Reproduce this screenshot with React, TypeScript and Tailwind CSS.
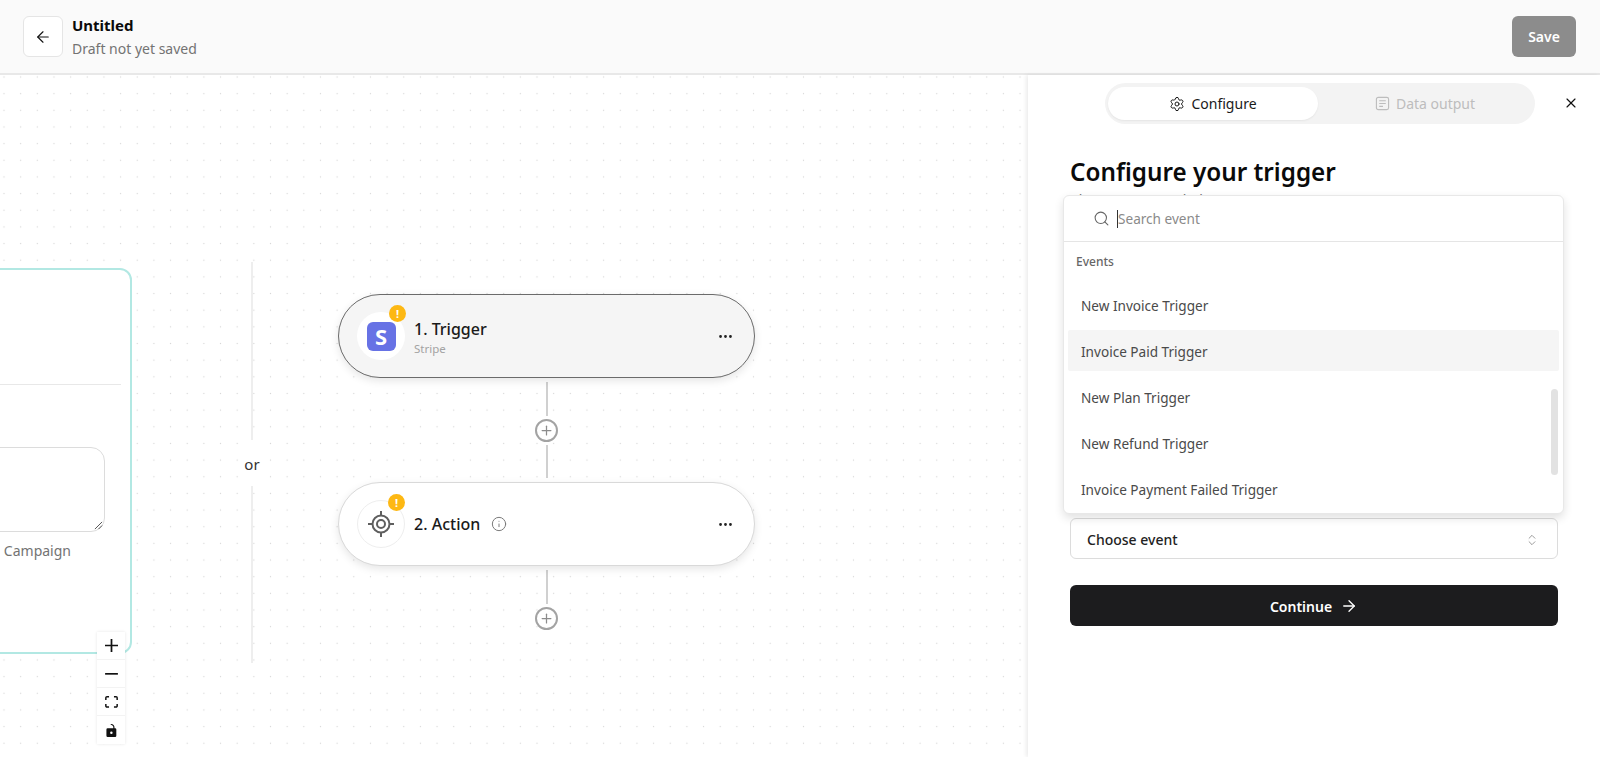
import { ArrowLeft, ArrowRight, ChevronsUpDown, Ellipsis, Info, Plus, Search, Settings, X } from "lucide-react";

const events = ["New Invoice Trigger", "Invoice Paid Trigger", "New Plan Trigger", "New Refund Trigger", "Invoice Payment Failed Trigger"];

const Badge = () => (
  <span className="absolute -right-[1px] -top-[7px] flex h-[17px] w-[17px] items-center justify-center rounded-full bg-[#fdb813] text-[11px] font-bold leading-none text-white">
    !
  </span>
);

const Connector = ({ tail = true }: { tail?: boolean }) => (
  <div className="flex h-[104px] w-[26px] flex-col items-center">
    <div className="mt-[4px] h-[34px] w-[2px] bg-[#d0d0d0]" />
    <div className="mt-[3px] flex h-[23px] w-[23px] shrink-0 items-center justify-center rounded-full border-2 border-[#a3a3a3] bg-white">
      <Plus size={15} strokeWidth={2} className="text-[#8c8c8c]" />
    </div>
    {tail && <div className="mt-[3px] h-[33px] w-[2px] bg-[#d0d0d0]" />}
  </div>
);

const Controls = () => (
  <div className="absolute left-[97px] top-[557px] flex w-[28px] flex-col bg-white shadow-[0_0_3px_rgba(0,0,0,0.1)]">
    <button className="flex h-[28px] items-center justify-center border-b border-[#f3f3f3]">
      <svg viewBox="0 0 32 32" className="h-[13px] w-[13px]" fill="#111">
        <path d="M32 18.133H18.133V32h-4.266V18.133H0v-4.266h13.867V0h4.266v13.867H32z" />
      </svg>
    </button>
    <button className="flex h-[28px] items-center justify-center border-b border-[#f3f3f3]">
      <svg viewBox="0 0 32 5" className="h-[2px] w-[13px]" fill="#111">
        <path d="M0 0h32v4.2H0z" />
      </svg>
    </button>
    <button className="flex h-[28px] items-center justify-center border-b border-[#f3f3f3]">
      <svg viewBox="0 0 32 30" className="h-[12px] w-[13px]" fill="#111">
        <path d="M3.692 4.63c0-.53.4-.938.939-.938h5.215V0H4.708C2.13 0 0 2.054 0 4.63v5.216h3.692V4.631zM27.354 0h-5.2v3.692h5.17c.53 0 .984.4.984.939v5.215H32V4.631A4.624 4.624 0 0027.354 0zm.954 24.83c0 .532-.4.94-.939.94h-5.215v3.768h5.215c2.577 0 4.631-2.13 4.631-4.707v-5.139h-3.692v5.139zm-23.677.94c-.531 0-.939-.4-.939-.94v-5.138H0v5.139c0 2.577 2.13 4.707 4.708 4.707h5.138V25.77H4.631z" />
      </svg>
    </button>
    <button className="flex h-[28px] items-center justify-center">
      <svg viewBox="0 0 25 32" className="h-[13px] w-[11px]" fill="#111">
        <path d="M21.333 10.667H19.81V7.619C19.81 3.429 16.38 0 12.19 0c-4.114 1.828-1.37 2.133.305 2.438 1.676.305 4.42 2.59 4.42 5.181v3.048H3.047A3.056 3.056 0 000 13.714v15.238A3.056 3.056 0 003.048 32h18.285a3.056 3.056 0 003.048-3.048V13.714a3.056 3.056 0 00-3.048-3.047zM12.19 24.533a3.056 3.056 0 01-3.047-3.047 3.056 3.056 0 013.047-3.048 3.056 3.056 0 013.048 3.048 3.056 3.056 0 01-3.048 3.047z" />
      </svg>
    </button>
  </div>
);

const Flow = () => (
  <div className="absolute left-[338px] top-[219px] flex w-[417px] flex-col items-center">
    <div className="relative flex h-[84px] w-full items-center rounded-full border border-[#6b6b6b] bg-[#f5f5f5] pl-[18px] pr-[20px] shadow-[0_3px_8px_rgba(0,0,0,0.1)]">
      <div className="relative flex h-[48px] w-[48px] items-center justify-center rounded-full bg-white">
        <div className="flex h-[29px] w-[29px] items-center justify-center rounded-[6px] bg-[#6772e5] text-[22px] font-bold leading-none text-white">
          S
        </div>
        <Badge />
      </div>
      <div className="ml-[9px] flex-1 pt-[4px]">
        <div className="text-[16px] font-medium leading-[22px] text-[#1a1a1a]">1. Trigger</div>
        <div className="text-[11.5px] leading-[18px] text-[#a3a3a3]">Stripe</div>
      </div>
      <Ellipsis size={17} className="text-[#222]" />
    </div>
    <Connector />
    <div className="relative flex h-[84px] w-full items-center rounded-full border border-[#d9d9d9] bg-white pl-[18px] pr-[20px] shadow-[0_3px_8px_rgba(0,0,0,0.1)]">
      <div className="relative flex h-[48px] w-[48px] items-center justify-center rounded-full border border-[#eeeeee] bg-white">
        <svg viewBox="0 0 28 28" className="h-[28px] w-[28px]" fill="none" stroke="#5f5f5f">
          <circle cx="14" cy="14" r="8.5" strokeWidth="2" />
          <circle cx="14" cy="14" r="4" strokeWidth="2" />
          <path d="M14 1v5M14 22v5M1 14h5M22 14h5" strokeWidth="2" />
        </svg>
        <Badge />
      </div>
      <div className="ml-[9px] flex flex-1 items-center gap-[11px]">
        <span className="text-[16px] font-medium text-[#1a1a1a]">2. Action</span>
        <Info size={16} strokeWidth={1.5} className="text-[#7a7a7a]" />
      </div>
      <Ellipsis size={17} className="text-[#222]" />
    </div>
    <Connector tail={false} />
  </div>
);

const LeftCard = () => (
  <div className="absolute -left-[260px] top-[193px] h-[386px] w-[392px] rounded-[12px] border-2 border-[#b2e8e3] bg-white">
    <div className="ml-[20px] mr-[9px] mt-[114px] border-t border-[#e8e8e8]" />
    <div className="relative ml-[20px] mr-[25px] mt-[62px] h-[85px] rounded-[14px] border border-[#dcdcdc]">
      <svg viewBox="0 0 10 10" className="absolute bottom-[1px] right-[1px] h-[9px] w-[9px]" stroke="#444" strokeWidth="1">
        <path d="M1 9l8-8M5 9l4-4" />
      </svg>
    </div>
    <div className="mr-[59px] mt-[9px] text-right text-[14px] leading-[20px] text-[#737373]">Campaign</div>
  </div>
);

const OrDivider = () => (
  <div className="absolute left-[232px] top-[187px] flex w-[40px] flex-col items-center">
    <div className="h-[178px] w-[2px] bg-[#eeeeee]" />
    <div className="flex h-[46px] items-center bg-white pt-[3px] text-[15px] leading-none text-[#333]">or</div>
    <div className="h-[177px] w-[2px] bg-[#eeeeee]" />
  </div>
);

const EventMenu = () => (
  <div className="absolute left-[35px] top-[120px] h-[319px] w-[501px] rounded-[6px] border border-[#e8e8e8] bg-white shadow-[0_4px_10px_rgba(0,0,0,0.12)]">
    <div className="flex h-[46px] items-center border-b border-[#e5e5e5] pl-[29px]">
      <Search size={17} strokeWidth={1.5} className="text-[#666]" />
      <span className="ml-[7px] h-[18px] w-px bg-[#333]" />
      <span className="pt-[1px] text-[13.6px] text-[#8a8a8a]">Search event</span>
    </div>
    <div className="relative px-[4px]">
      <div className="pb-[14px] pl-[8px] pt-[12px] text-[12px] font-medium leading-[16px] text-[#666]">Events</div>
      {events.map((event, index) => (
        <div
          key={event}
          className={`flex h-[41px] items-center rounded-[2px] pl-[13px] pt-[4px] text-[13.6px] text-[#4a4a4a] ${index > 0 ? "mt-[5px]" : ""} ${index === 1 ? "bg-[#f5f5f5]" : ""}`}
        >
          {event}
        </div>
      ))}
      <div className="absolute right-[5px] top-[147px] h-[86px] w-[7px] rounded-full bg-[#e2e2e2]" />
    </div>
  </div>
);

const Panel = () => (
  <aside className="relative z-10 w-[572px] shrink-0 bg-white px-[42px] shadow-[-2px_0_4px_rgba(0,0,0,0.08)]">
    <div className="ml-[35px] mt-[8px] flex h-[41px] w-[430px] items-center rounded-full bg-[#f3f3f3] p-[3px]">
      <div className="flex h-[33px] w-[210px] items-center justify-center gap-[6px] rounded-full bg-white text-[14px] text-[#1a1a1a] shadow-[0_1px_2px_rgba(0,0,0,0.06)]">
        <Settings size={16} strokeWidth={1.5} />
        Configure
      </div>
      <div className="flex flex-1 items-center justify-center gap-[6px] text-[14px] text-[#bdbdbd]">
        <svg viewBox="0 0 16 16" className="h-[15px] w-[15px]" fill="none" stroke="#bdbdbd" strokeWidth="1.2">
          <rect x="1.5" y="1.5" width="13" height="13" rx="2" />
          <path d="M4.5 5h7M4.5 8h7M4.5 11h4" />
        </svg>
        Data output
      </div>
    </div>
    <X size={16} strokeWidth={1.75} className="absolute right-[21px] top-[20px] text-[#111]" />
    <h2 className="mt-[32px] text-[24.25px] font-semibold leading-[32px] text-[#0a0a0a]">Configure your trigger</h2>
    <p className="mt-[2px] text-[14px] leading-[20px] text-[#737373]">Choose an event below</p>
    <div className="mt-[308px] flex h-[41px] items-center justify-between rounded-[6px] border border-[#dcdcdc] pl-[16px] pr-[18px] pt-[2px] text-[14px] font-medium text-[#222]">
      Choose event
      <ChevronsUpDown size={14} strokeWidth={1.25} className="text-[#777]" />
    </div>
    <button className="mt-[26px] flex h-[41px] w-full items-center justify-center gap-[8px] rounded-[6px] bg-[#1c1c1e] pt-[1px] text-[14px] font-semibold text-white">
      Continue
      <ArrowRight size={18} strokeWidth={1.75} />
    </button>
    <EventMenu />
  </aside>
);

export default function App() {
  return (
    <div className="flex h-screen flex-col overflow-hidden bg-white font-['Noto_Sans',sans-serif]">
      <header className="flex h-[75px] shrink-0 items-center justify-between border-b-2 border-[#e8e8e8] bg-[#fafafa] pl-[23px] pr-[24px]">
        <div className="flex items-center gap-[9px]">
          <button className="flex h-[41px] w-[40px] items-center justify-center rounded-[6px] border border-[#e5e5e5] bg-white">
            <ArrowLeft size={18} strokeWidth={1.5} className="text-[#111]" />
          </button>
          <div>
            <div className="pt-[1px] text-[15px] font-bold leading-[23px] text-[#0a0a0a]">Untitled</div>
            <div className="text-[14px] leading-[24px] text-[#737373]">Draft not yet saved</div>
          </div>
        </div>
        <button className="h-[41px] w-[64px] rounded-[6px] bg-[#8c8c8c] text-[14px] font-semibold text-white">Save</button>
      </header>
      <div className="flex min-h-0 flex-1">
        <main className="relative flex-1 overflow-hidden bg-[radial-gradient(circle,#d6d6d6_0.75px,transparent_1px)] bg-[size:16.67px_16.67px] bg-[position:-4.33px_-6.33px]">
          <LeftCard />
          <OrDivider />
          <Flow />
          <Controls />
        </main>
        <Panel />
      </div>
    </div>
  );
}
